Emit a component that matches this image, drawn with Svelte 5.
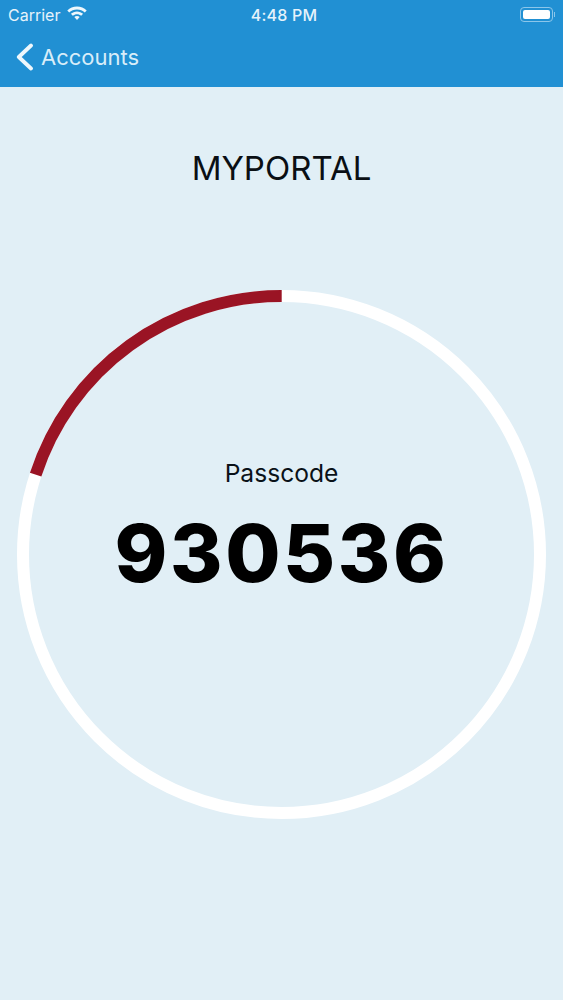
<script>
	const SIZE = 529;
	const STROKE = 12;
	const radius = (SIZE - STROKE) / 2;
	const circumference = 2 * Math.PI * radius;
	const elapsed = 0.2;
	const code = '930536';
</script>

<div class="screen">
	<header class="header">
		<div class="status">
			<div class="status-left">
				<span class="carrier">Carrier</span>
				<svg class="wifi" viewBox="0 0 20 15" width="20" height="15" aria-hidden="true">
					<path d="M10 .6C6.2.6 2.8 2 .3 4.4l1.9 2C4.2 4.5 7 3.4 10 3.4s5.8 1.1 7.8 3l1.9-2C17.2 2 13.8.6 10 .6z" />
					<path d="M10 5.4c-2.4 0-4.5.9-6.1 2.4l1.9 2c1.1-1 2.6-1.6 4.2-1.6s3.1.6 4.2 1.6l1.9-2C14.5 6.3 12.4 5.4 10 5.4z" />
					<path d="M10 10c-1.1 0-2 .4-2.7 1.1L10 14l2.7-2.9C12 10.4 11.1 10 10 10z" />
				</svg>
			</div>
			<span class="time">4:48 PM</span>
			<div class="status-right">
				<div class="battery"><div class="battery-fill"></div></div>
				<div class="battery-cap"></div>
			</div>
		</div>
		<nav class="nav">
			<svg class="chevron" viewBox="0 0 18 28" width="18" height="28" aria-hidden="true">
				<path d="M15 2.5 2.8 14 15 25.5" />
			</svg>
			<span class="back">Accounts</span>
		</nav>
	</header>

	<main class="content">
		<h1 class="title">MYPORTAL</h1>
		<div class="ring">
			<svg viewBox="0 0 {SIZE} {SIZE}" width={SIZE} height={SIZE} aria-hidden="true">
				<circle class="track" cx={SIZE / 2} cy={SIZE / 2} r={radius} stroke-width={STROKE} />
				<circle
					class="progress"
					cx={SIZE / 2}
					cy={SIZE / 2}
					r={radius}
					stroke-width={STROKE}
					stroke-dasharray="{circumference * elapsed} {circumference}"
					transform="rotate({-90 - 360 * elapsed} {SIZE / 2} {SIZE / 2})"
				/>
			</svg>
			<div class="code-block">
				<div class="label">Passcode</div>
				<div class="code">{code}</div>
			</div>
		</div>
	</main>
</div>

<style>
	:global(body) {
		background: #e1eff6;
	}

	.screen {
		height: 1000px;
		overflow: hidden;
		font-family: Inter, 'Liberation Sans', sans-serif;
		background: #e1eff6;
	}

	.header {
		height: 87px;
		background: #2190d3;
		color: #e6f3fb;
	}

	.status {
		height: 29px;
		padding: 0 8px 0 8px;
		display: grid;
		grid-template-columns: 1fr auto 1fr;
		align-items: center;
		font-size: 16px;
	}

	.status-left {
		display: flex;
		align-items: center;
		gap: 7px;
	}

	.wifi {
		fill: #eef7fc;
		margin-top: -2px;
	}

	.time {
		padding-left: 5px;
		font-weight: 500;
		letter-spacing: 0.2px;
	}

	.status-right {
		display: flex;
		justify-content: flex-end;
		align-items: center;
		gap: 1px;
	}

	.battery {
		width: 33px;
		height: 15px;
		box-sizing: border-box;
		padding: 2px;
		border: 1px solid #8cc6ea;
		border-radius: 4px;
	}

	.battery-fill {
		height: 100%;
		background: #fff;
		border-radius: 2px;
	}

	.battery-cap {
		width: 1.5px;
		height: 5px;
		background: #8cc6ea;
	}

	.nav {
		height: 58px;
		padding: 0 0 3px 16px;
		box-sizing: border-box;
		display: flex;
		align-items: center;
		gap: 7px;
	}

	.chevron {
		fill: none;
		stroke: #eef7fc;
		stroke-width: 3.8;
		stroke-linecap: round;
		stroke-linejoin: round;
	}

	.back {
		font-size: 22px;
		color: #d8edf9;
	}

	.content {
		display: flex;
		flex-direction: column;
		align-items: center;
	}

	.title {
		margin: 61px 0 0;
		font-size: 33px;
		line-height: 40px;
		font-weight: 400;
		color: #0a0f14;
	}

	.ring {
		position: relative;
		margin-top: 102px;
		width: 529px;
		height: 529px;
	}

	.ring svg {
		display: block;
	}

	.track {
		fill: none;
		stroke: #fff;
	}

	.progress {
		fill: none;
		stroke: #9a1424;
	}

	.code-block {
		position: absolute;
		left: 0;
		right: 0;
		top: 165px;
		text-align: center;
		color: #000;
	}

	.label {
		font-size: 24.6px;
		line-height: 36px;
		color: #0a1218;
	}

	.code {
		margin-top: 14px;
		font-size: 80px;
		line-height: 96px;
		font-weight: 800;
		letter-spacing: 2.6px;
	}
</style>
